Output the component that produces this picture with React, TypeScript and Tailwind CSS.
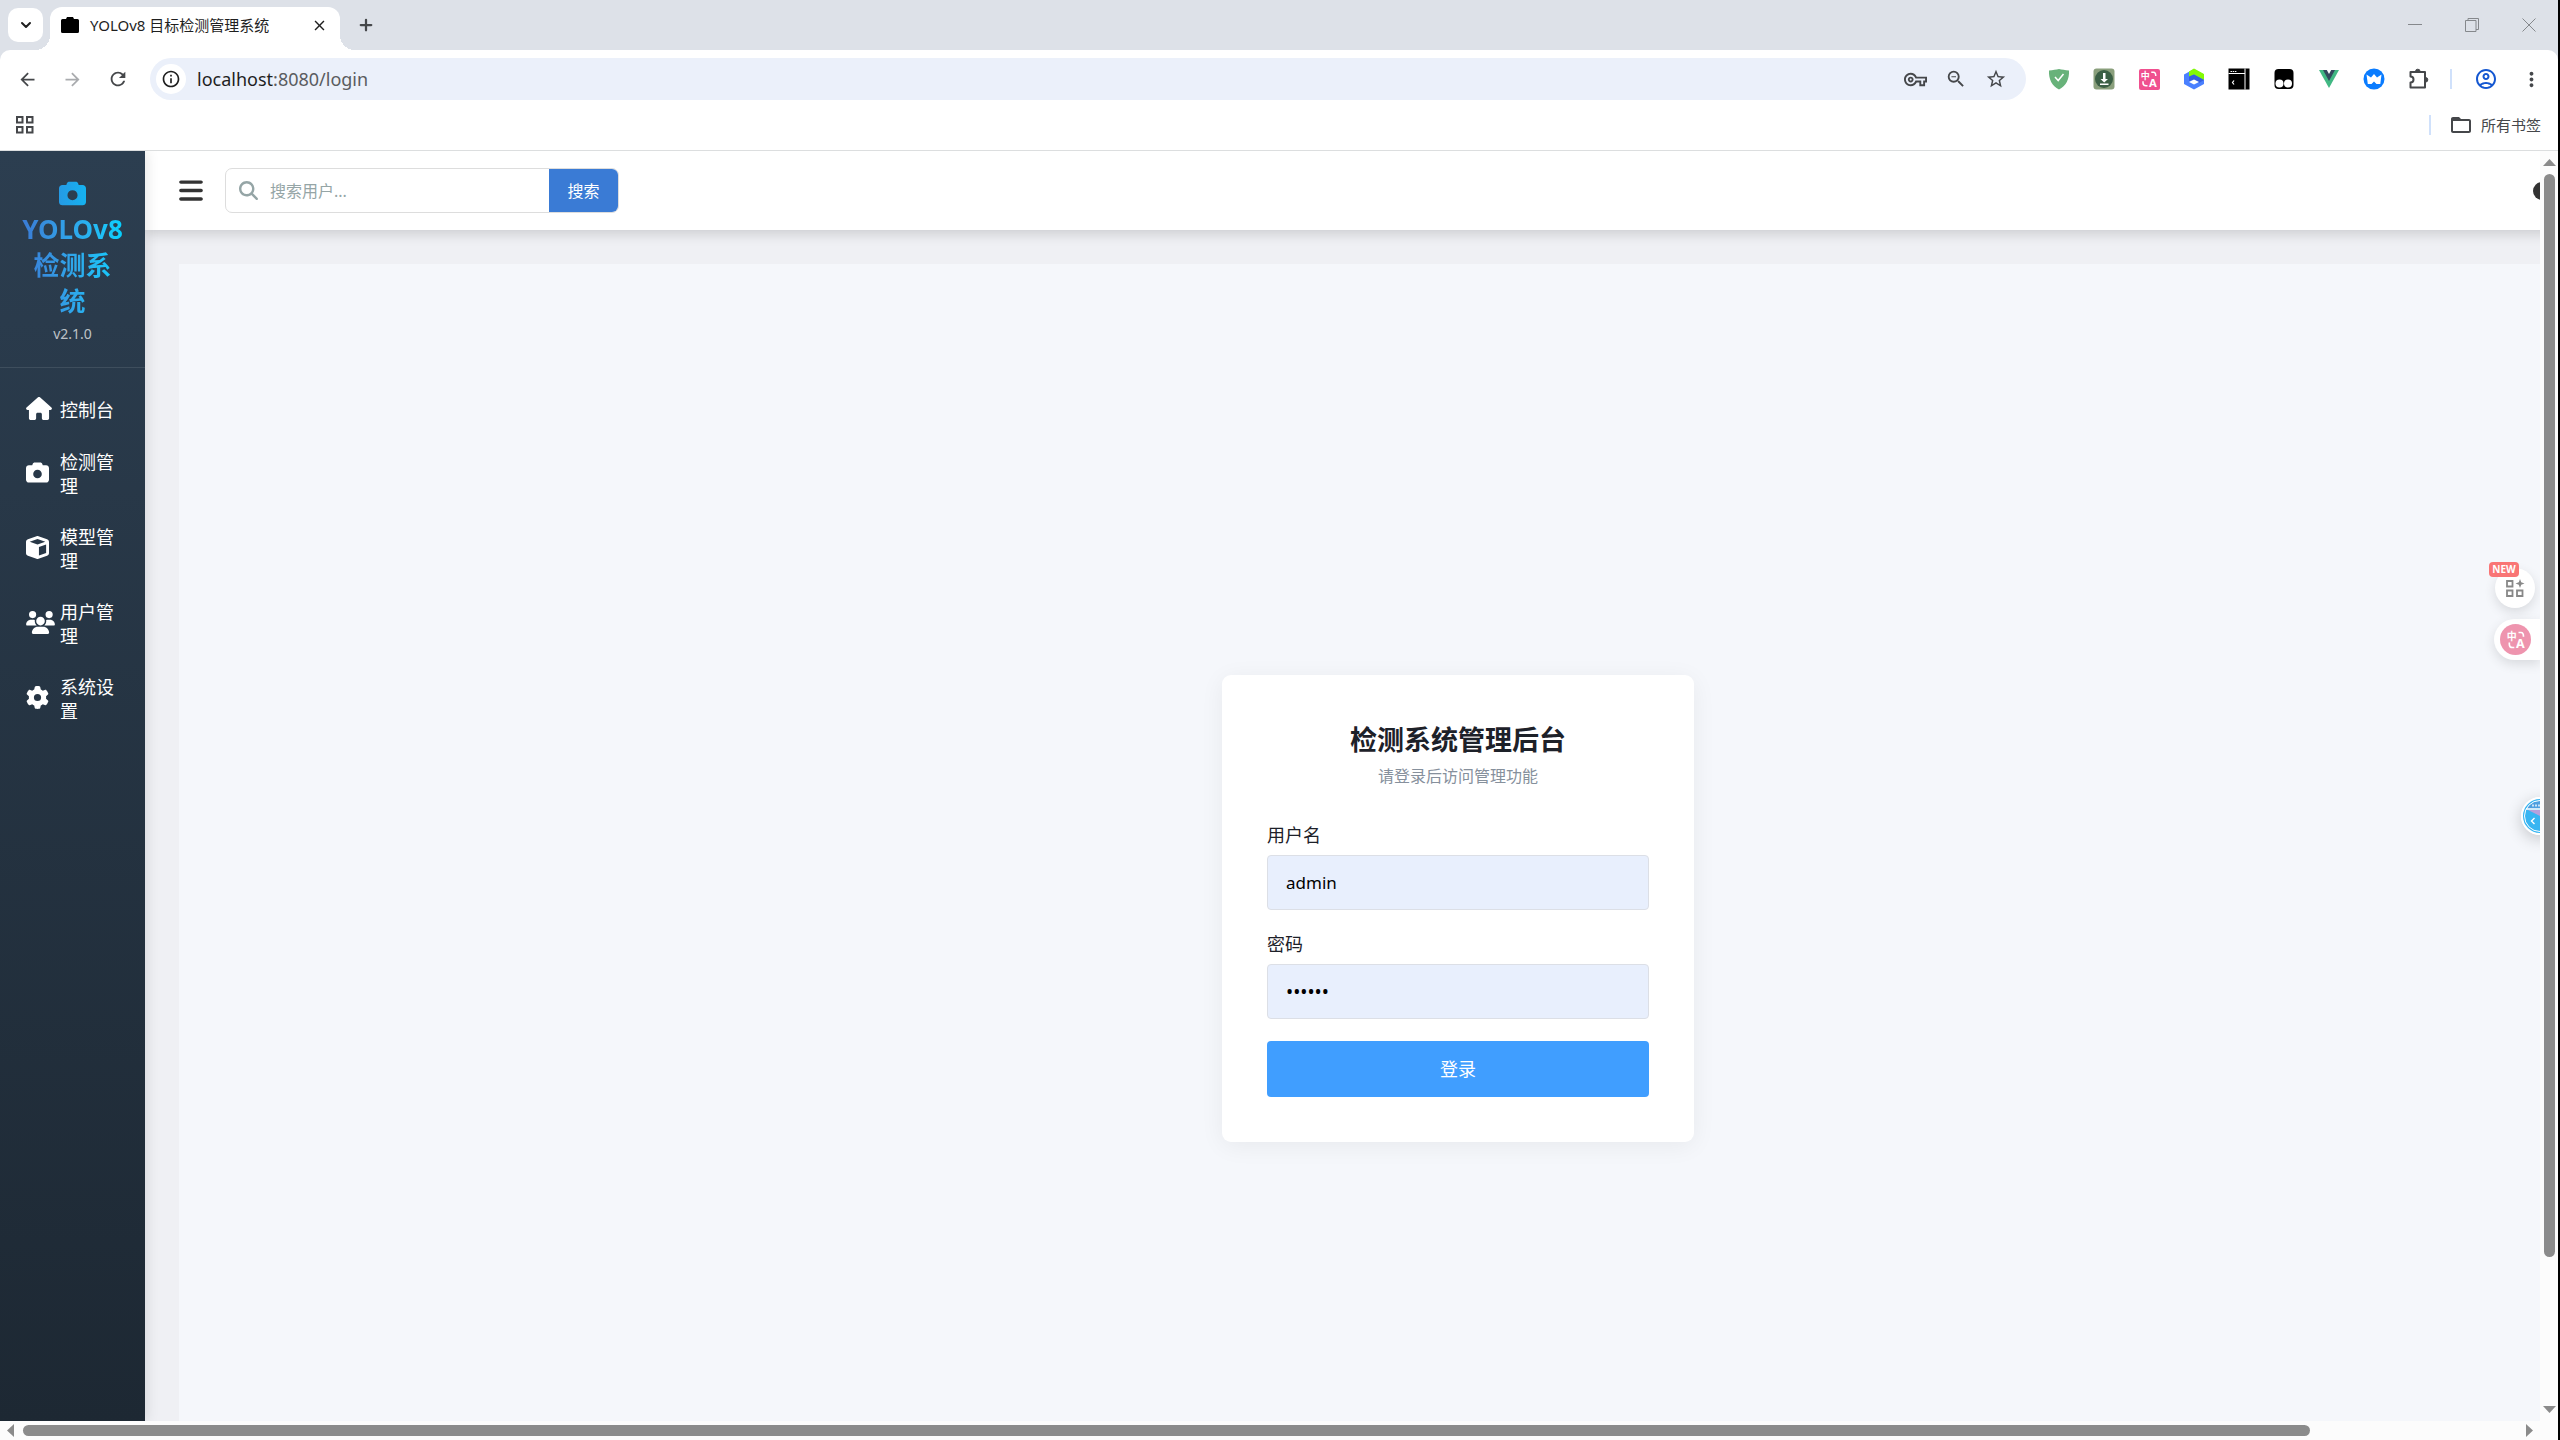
import type { ReactNode } from "react";
import { FaBars, FaCamera, FaCube, FaGear, FaHouse, FaMagnifyingGlass, FaUsers } from "react-icons/fa6";
import {
  MdArrowBack,
  MdArrowForward,
  MdClose,
  MdFolderOpen,
  MdMoreVert,
  MdOutlineAccountCircle,
  MdOutlineInfo,
  MdOutlineVpnKey,
  MdOutlineZoomOut,
  MdRefresh,
  MdStarBorder,
} from "react-icons/md";
import { ChevronDown, Plus } from "lucide-react";

interface NavItem {
  label: string;
  icon: ReactNode;
}

const navItems: NavItem[] = [
  { label: "控制台", icon: <FaHouse className="h-[23px] w-[26px]" /> },
  { label: "检测管理", icon: <FaCamera size={23} /> },
  { label: "模型管理", icon: <FaCube size={23} /> },
  { label: "用户管理", icon: <FaUsers className="h-[23px] w-[29px]" /> },
  { label: "系统设置", icon: <FaGear size={23} /> },
];

function TranslateGlyph({ size }: { size: number }) {
  return (
    <svg width={size} height={size} viewBox="0 0 24 24" fill="none" stroke="#fff" strokeWidth="2" className="overflow-visible">
      <text x="1" y="12" fontSize="12" fontWeight="700" fill="#fff" stroke="none" className="font-['Noto_Sans_CJK_SC',sans-serif]">
        中
      </text>
      <text x="12" y="22" fontSize="15" fontWeight="700" fill="#fff" stroke="none" className="font-['Noto_Sans',sans-serif]">
        A
      </text>
      <path d="M15 3h3q3 0 3 5" />
      <path d="M4 15v2q0 4 4 4h2" />
    </svg>
  );
}

const extensions: NavItem[] = [
  {
    label: "安全防护",
    icon: (
      <svg width="22" height="22" viewBox="0 0 22 22">
        <path d="M11 1c3 .6 6 1.200 10 1.500C21.500 11 18 18 11 21.500 4 18 .5 11 1 2.500 5 2.200 8 1.600 11 1z" fill="#68b27a" />
        <path d="M7 9l3.200 3.500L15.500 6" fill="none" stroke="#fff" strokeWidth="1.500" />
      </svg>
    ),
  },
  {
    label: "下载",
    icon: (
      <svg width="22" height="22" viewBox="0 0 22 22">
        <rect x=".5" y=".5" width="21" height="21" rx="3" fill="#8a9f7c" />
        <circle cx="11" cy="11" r="9" fill="#3b5f45" />
        <path d="M10 5h2.500v6H15L11.200 14.500 7.500 11H10zM7 15.500h8.500v1.500H7z" fill="#fff" />
      </svg>
    ),
  },
  {
    label: "翻译",
    icon: (
      <span className="flex size-[21px] items-center justify-center rounded-xs bg-[#f0508f]">
        <TranslateGlyph size={18} />
      </span>
    ),
  },
  {
    label: "立方",
    icon: (
      <svg width="22" height="22" viewBox="0 0 22 22">
        <path d="M11 1l10 5.500v9.500L11 21.500 1 16V6.500z" fill="#4a80ff" />
        <path d="M11 .5l10 5.500v6L11 6.500 6 9V3.500z" fill="#84fa05" />
        <path d="M6 8.500l5-2 10 5.500-5 3-5-3-5 1z" fill="#3560e0" />
        <path d="M11 11.500l5 2.500-5 2.500L6 14z" fill="#fff" />
      </svg>
    ),
  },
  {
    label: "终端",
    icon: (
      <svg width="22" height="22" viewBox="0 0 22 22">
        <path d="M.5.5h21v21H.5z" fill="#000" />
        <path d="M.5 5.500H17M17 .5v21" stroke="#fff" strokeWidth="1" />
        <path d="M2.500 3.500h6" stroke="#fff" strokeWidth="1" strokeDasharray="1.500 .7" />
        <path d="M6 12.500L4.500 14.500 6 16.500" stroke="#fff" strokeWidth="1.200" fill="none" />
      </svg>
    ),
  },
  {
    label: "脚本",
    icon: (
      <svg width="22" height="22" viewBox="0 0 22 22">
        <rect x="1.500" y="1" width="19" height="20" rx="4" fill="#000" />
        <circle cx="6.500" cy="15.500" r="4" fill="#fff" />
        <circle cx="15" cy="15.500" r="4" fill="#fff" />
      </svg>
    ),
  },
  {
    label: "Vue",
    icon: (
      <svg width="22" height="22" viewBox="0 0 22 22">
        <path d="M1 2h20l-10 18z" fill="#41b883" />
        <path d="M5 2h12l-6 11z" fill="#34495e" />
        <path d="M8.800 2h4.400L11 6z" fill="#fff" />
      </svg>
    ),
  },
  {
    label: "助手",
    icon: (
      <svg width="22" height="22" viewBox="0 0 22 22">
        <circle cx="11" cy="11" r="10.500" fill="#0a7cff" />
        <path d="M3.500 6.500L8 9.500l3-3.500 3 3.500 4.500-3-1.200 9.500h-3.800L11 13.500 8.500 16H4.800z" fill="#fff" />
      </svg>
    ),
  },
  {
    label: "扩展程序",
    icon: (
      <svg width="22" height="22" viewBox="0 0 22 22" fill="none" stroke="#45474a" strokeWidth="2">
        <path d="M2.500 4h14.500v15.500H2.500v-5a3 3 0 0 0 0-6z" strokeLinejoin="round" />
        <path d="M7.500 3.500a2.300 2.300 0 0 1 4.600 0zM17.500 9.500a2.300 2.300 0 0 1 0 4.600z" fill="#45474a" strokeWidth="1" />
      </svg>
    ),
  },
];

function TabStrip() {
  return (
    <div className="flex h-[50px] items-center bg-[#dde1e8] pl-2">
      <button aria-label="搜索标签页" className="flex h-[34px] w-[35px] items-center justify-center rounded-[10px] bg-white">
        <ChevronDown size={16} strokeWidth={3} className="text-[#1f1f1f]" />
      </button>
      <div className="relative ml-[7px] flex h-[43px] w-[290px] items-center self-end rounded-t-[12px] bg-white pr-3 pl-[11px] pb-[7px]">
        <span className="absolute bottom-0 -left-[15px] size-[15px] bg-[radial-gradient(circle_at_0_0,transparent_15px,#fff_15px)]" />
        <span className="absolute -right-[15px] bottom-0 size-[15px] bg-[radial-gradient(circle_at_100%_0,transparent_15px,#fff_15px)]" />
        <svg width="18" height="16" viewBox="0 0 18 16">
          <path d="M5 2l1-2h6l1 2h3.500Q18 2 18 3.500v11q0 1.500-1.500 1.500h-15Q0 16 0 14.500v-11Q0 2 1.500 2z" />
        </svg>
        <span className="ml-[11px] text-[15px] text-[#1f1f1f]">YOLOv8 目标检测管理系统</span>
        <button aria-label="关闭标签页" className="ml-auto">
          <MdClose size={17} className="text-[#1f1f1f]" />
        </button>
      </div>
      <button aria-label="新标签页" className="ml-[17px]">
        <Plus size={18} strokeWidth={3} className="text-[#45474a]" />
      </button>
      <div className="ml-auto flex items-center gap-[43px] pr-[22px] text-[#85888c]">
        <button aria-label="最小化">
          <svg width="14" height="14" viewBox="0 0 14 14" stroke="currentColor">
            <path d="M0 6.500h14" />
          </svg>
        </button>
        <button aria-label="还原">
          <svg width="14" height="14" viewBox="0 0 14 14" stroke="currentColor" fill="none">
            <path d="M.5 2.500h10.500v11H.5zM3 2.500v-2h10.500v11h-2.500" />
          </svg>
        </button>
        <button aria-label="关闭">
          <svg width="14" height="14" viewBox="0 0 14 14" stroke="currentColor">
            <path d="M.5.5l13 13M13.500.5l-13 13" />
          </svg>
        </button>
      </div>
    </div>
  );
}

function Toolbar() {
  return (
    <div className="bg-[#dde1e8]">
      <div className="flex h-[50px] items-end rounded-t-[10px] bg-white pl-[17px] text-[#45474a]">
        <div className="flex h-[42px] items-center gap-[24px]">
          <button aria-label="后退">
            <MdArrowBack size={21} />
          </button>
          <button aria-label="前进" className="text-[#a9abae]">
            <MdArrowForward size={21} />
          </button>
          <button aria-label="重新加载">
            <MdRefresh size={22} />
          </button>
        </div>
        <div className="ml-[21px] flex h-[42px] flex-1 items-center rounded-full bg-[#ebf0fa] pr-[19px] pl-[6px]">
          <span className="flex size-[30px] items-center justify-center rounded-full bg-white">
            <MdOutlineInfo size={20} className="text-[#1f1f1f]" />
          </span>
          <p className="ml-[11px] text-[18px] text-[#5a5c60]">
            <span className="text-[#1f1f1f]">localhost</span>:8080/login
          </p>
          <div className="ml-auto flex items-center gap-[18px]">
            <button aria-label="密码">
              <MdOutlineVpnKey size={23} />
            </button>
            <button aria-label="缩放">
              <MdOutlineZoomOut size={22} />
            </button>
            <button aria-label="收藏">
              <MdStarBorder size={22} />
            </button>
          </div>
        </div>
        <div className="ml-[22px] flex h-[42px] items-center gap-[23px]">
          {extensions.map((ext) => (
            <button key={ext.label} aria-label={ext.label} className="flex w-[22px] justify-center">
              {ext.icon}
            </button>
          ))}
        </div>
        <div className="flex h-[42px] items-center pr-[15px]">
          <span className="ml-[20px] h-5 w-[2px] bg-[#d0e1fb]" />
          <button aria-label="用户" className="ml-[22px]">
            <MdOutlineAccountCircle size={24} className="text-[#1457d1]" />
          </button>
          <button aria-label="更多" className="ml-[22px]">
            <MdMoreVert size={23} />
          </button>
        </div>
      </div>
    </div>
  );
}

function BookmarkBar() {
  return (
    <div className="flex h-[51px] items-center border-b border-[#dcdedf] bg-white pr-[17px] pl-[16px]">
      <button aria-label="应用">
        <svg width="18" height="18" viewBox="0 0 18 18" fill="none" stroke="#45474a" strokeWidth="2">
          <path d="M1 1h5.500v5.500H1zM11 1h5.500v5.500H11zM1 11h5.500v5.500H1zM11 11h5.500v5.500H11z" />
        </svg>
      </button>
      <span className="ml-auto h-5 w-[2px] bg-[#d0e1fb]" />
      <button className="ml-[18px] flex items-center gap-[8px] text-[15px] text-[#45474a]">
        <MdFolderOpen size={24} />
        所有书签
      </button>
    </div>
  );
}

function Sidebar() {
  return (
    <aside className="z-10 flex w-[145px] shrink-0 flex-col bg-linear-to-b from-[#2c3e50] to-[#1d2833] shadow-[2px_0_12px_rgba(0,0,0,0.1)]">
      <div className="flex flex-col items-center border-b border-white/10 px-5 pt-6 pb-[21px]">
        <svg width="0" height="0" className="absolute">
          <linearGradient id="brand">
            <stop offset="0" stopColor="#259ae4" />
            <stop offset="1" stopColor="#15b2f0" />
          </linearGradient>
        </svg>
        <div className="flex h-9 items-center">
          <FaCamera size={27} fill="url(#brand)" />
        </div>
        <h1 className="w-[102px] bg-linear-to-r from-[#3a7bd5] to-[#00d2ff] bg-clip-text text-center text-[26px] leading-9 font-bold text-transparent">
          YOLOv8 检测系统
        </h1>
        <p className="mt-[3px] text-[14px] leading-6 text-white/70">v2.1.0</p>
      </div>
      <nav className="flex flex-col gap-px pt-4">
        {navItems.map((item) => (
          <a key={item.label} href="#" className="flex items-center py-[13px] pr-[24px] pl-[26px] text-[18px] leading-6 text-white">
            <span className="w-[34px] shrink-0 pb-[3px]">{item.icon}</span>
            <span className="flex-1">{item.label}</span>
          </a>
        ))}
      </nav>
    </aside>
  );
}

function Header() {
  return (
    <header className="relative flex h-[79px] items-center bg-white pl-[34px] shadow-[0_4px_12px_rgba(0,0,0,0.15)]">
      <button aria-label="菜单">
        <FaBars className="h-[27px] w-6 text-[#333]" />
      </button>
      <form className="ml-[22px] flex h-[45px] w-[394px] items-stretch overflow-hidden rounded-[7px] border border-[#ddd]">
        <label htmlFor="search" aria-label="搜索用户" className="flex items-center pr-3 pl-[13px]">
          <FaMagnifyingGlass size={19} className="text-[#95a5a6]" />
        </label>
        <input
          id="search"
          type="text"
          placeholder="搜索用户..."
          className="min-w-0 flex-1 text-[16px] outline-none placeholder:text-[#95a5a6]"
        />
        <button type="button" className="w-[69px] bg-[#3a7bd5] text-[16px] text-white">
          搜索
        </button>
      </form>
      <span className="mr-[220px] ml-auto size-[18px] rounded-full bg-[#333]" />
    </header>
  );
}

function LoginCard() {
  return (
    <form className="flex w-[472px] flex-col rounded-[9px] bg-white p-[45px] shadow-[0_4px_24px_rgba(0,0,0,0.06)]">
      <h2 className="text-center text-[27px] leading-10 font-bold text-[#1d2129]">检测系统管理后台</h2>
      <p className="mt-1 mb-px text-center text-[16px] leading-6 text-[#86909c]">请登录后访问管理功能</p>
      <label htmlFor="username" className="mt-[34px] text-[18px] leading-6 text-[#1d2129]">
        用户名
      </label>
      <input
        id="username"
        type="text"
        defaultValue="admin"
        className="mt-2 h-[55px] rounded-sm border border-[#dcdfe6] bg-[#e8effd] px-[18px] text-[17px] text-black outline-none"
      />
      <label htmlFor="password" className="mt-[22px] text-[18px] leading-6 text-[#1d2129]">
        密码
      </label>
      <input
        id="password"
        type="password"
        defaultValue="123456"
        className="mt-2 h-[55px] rounded-sm border border-[#dcdfe6] bg-[#e8effd] px-[18px] text-[19px] text-black outline-none"
      />
      <button type="button" className="mt-[22px] h-14 rounded-sm bg-[#409eff] text-[18px] text-white">
        登录
      </button>
    </form>
  );
}

function FloatingTools() {
  return (
    <div className="absolute inset-y-0 right-0 z-20 w-[52px] pt-[411px]">
      <div className="relative flex h-[46px] items-end justify-end pr-[5px]">
        <button aria-label="工具" className="flex size-10 items-center justify-center rounded-full bg-white shadow-[0_4px_12px_rgba(0,0,0,0.12)]">
          <svg width="18" height="18" viewBox="0 0 18 18" fill="none" stroke="#888" strokeWidth="1.800" className="overflow-visible">
            <path d="M1 2h5.500v5.500H1zM1 11.500h5.500V17H1zM11 11.500h5.500V17H11z" />
            <path d="M14 0l1.200 3.300L18.500 4.500l-3.300 1.200L14 9l-1.200-3.300L9.500 4.500l3.300-1.200z" fill="#888" stroke="none" />
          </svg>
        </button>
        <span className="absolute top-0 left-px flex h-[15px] w-[30px] items-center justify-center rounded-[4px] bg-[#f97575] text-[10px] font-bold text-white">
          NEW
        </span>
      </div>
      <button aria-label="翻译" className="mt-[11px] ml-[6px] flex h-[41px] w-[46px] items-center rounded-l-full bg-white pl-[6px] shadow-[0_4px_12px_rgba(0,0,0,0.12)]">
        <span className="flex size-[31px] items-center justify-center rounded-full bg-[#ee94ae]">
          <TranslateGlyph size={20} />
        </span>
      </button>
      <button aria-label="助手" className="mt-[137px] ml-[33px] block size-[38px] rounded-full shadow-[0_4px_16px_rgba(0,0,0,0.2)]">
        <svg width="38" height="38" viewBox="0 0 38 38">
          <circle cx="19" cy="19" r="18" fill="#38b5f2" stroke="#fff" strokeWidth="2" />
          <path d="M5 12a16 16 0 0 1 28 0z" fill="#4d9fe0" />
          <path d="M7 13h24v12z" fill="#b7a0dc" />
          <circle cx="19" cy="19" r="15.500" fill="none" stroke="#fff" strokeWidth="1" />
          <path d="M5 12h28" stroke="#fff" strokeWidth="1.500" />
          <path d="M12 7.500v2M15 7.500v2M18 7.500v2M13.500 21l-3 3 3 3" fill="none" stroke="#fff" strokeWidth="1.400" />
        </svg>
      </button>
    </div>
  );
}

function VerticalScrollbar() {
  return (
    <div className="flex w-[18px] shrink-0 flex-col items-center bg-[#fcfcfc] py-2 text-[#8b8b8b]">
      <svg width="13" height="7" viewBox="0 0 13 7" fill="currentColor">
        <path d="M6.500 0L13 7H0z" />
      </svg>
      <div className="my-2 flex w-[11px] flex-1 flex-col">
        <div className="h-[88.5%] rounded-full bg-[#8b8b8b]" />
      </div>
      <svg width="13" height="7" viewBox="0 0 13 7" fill="currentColor">
        <path d="M0 0h13L6.500 7z" />
      </svg>
    </div>
  );
}

function HorizontalScrollbar() {
  return (
    <div className="flex h-[19px] shrink-0 items-center bg-[#fcfcfc] pr-[25px] pl-[7px] text-[#8b8b8b]">
      <svg width="7" height="13" viewBox="0 0 7 13" fill="currentColor">
        <path d="M7 0v13L0 6.500z" />
      </svg>
      <div className="mx-[9px] h-[11px] flex-1">
        <div className="h-full w-[91.7%] rounded-full bg-[#8b8b8b]" />
      </div>
      <svg width="7" height="13" viewBox="0 0 7 13" fill="currentColor">
        <path d="M0 0l7 6.500L0 13z" />
      </svg>
    </div>
  );
}

export default function App() {
  return (
    <div className="flex h-screen flex-col border-r-2 border-black bg-white font-['Noto_Sans','Noto_Sans_CJK_SC',sans-serif]">
      <TabStrip />
      <Toolbar />
      <BookmarkBar />
      <div className="flex min-h-0 flex-1">
        <div className="relative flex min-w-0 flex-1 overflow-hidden">
          <Sidebar />
          <div className="min-w-0 flex-1">
            {/* page is larger than the viewport, the rest is scrolled out */}
            <div className="flex h-[calc(100%+166px)] w-[calc(100%+231px)] flex-col bg-[#eff0f4]">
              <Header />
              <main className="flex flex-1 flex-col p-[34px]">
                <div className="flex flex-1 items-center justify-center bg-[#f5f7fb]">
                  <LoginCard />
                </div>
              </main>
            </div>
          </div>
          <FloatingTools />
        </div>
        <VerticalScrollbar />
      </div>
      <HorizontalScrollbar />
    </div>
  );
}
